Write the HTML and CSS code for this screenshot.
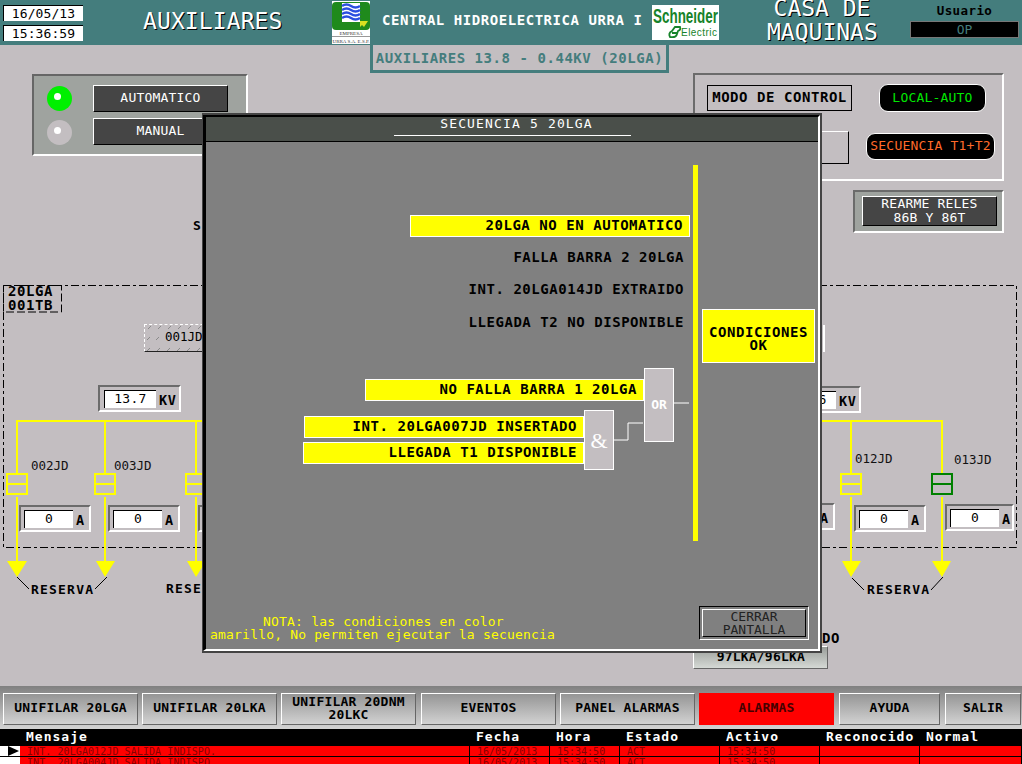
FILE: index.html
```html
<!DOCTYPE html>
<html lang="es">
<head>
<meta charset="utf-8">
<title>Auxiliares</title>
<link rel="stylesheet" href="styles.css">
</head>
<body>
<div class="page">
  <header class="header">
    <div class="clock">
      <div class="clock-box">16/05/13</div>
      <div class="clock-box">15:36:59</div>
    </div>
    <div class="title-main">AUXILIARES</div>
    <svg class="logo-urra" viewBox="0 0 38 43">
      <rect width="38" height="43" fill="#fff"/>
      <path d="M0 5Q0 1 4 1H34Q38 1 38 5V25Q38 29 34 29H4Q0 29 0 25Z" fill="#1f8a1c"/>
      <rect x="10" y="2" width="18" height="19" fill="#fff"/>
      <path d="M10 5q4.500-3 9 0t9 0M10 9q4.500-3 9 0t9 0M10 13q4.500-3 9 0t9 0M10 17q4.500-3 9 0t9 0" fill="none" stroke="#2b4fe0" stroke-width="2.400"/>
      <path d="M28 20h8l-4 6-2-2-2 2z" fill="#d8e020"/>
      <text class="logo-tiny" x="19" y="34" text-anchor="middle">EMPRESA</text>
      <rect y="35" width="38" height="1" fill="#999"/>
      <text class="logo-tiny" x="19" y="42" text-anchor="middle">URRA S.A. E.S.P.</text>
    </svg>
    <div class="title-plant">CENTRAL HIDROELECTRICA URRA I</div>
    <svg class="logo-schneider" viewBox="0 0 67 35">
      <rect width="67" height="35" fill="#fff"/>
      <text class="sch-name" x="1" y="18" textLength="65" lengthAdjust="spacingAndGlyphs">Schneider</text>
      <path d="M18 32q-2-4 2-6l3-4h5q1 3-2 4l-1 3q-1 4-7 3zM20 28h6" fill="none" stroke="#17832a" stroke-width="1.800"/>
      <text class="sch-sub" x="29" y="31" textLength="36" lengthAdjust="spacing">Electric</text>
    </svg>
    <div class="title-area">CASA DE<br>MAQUINAS</div>
    <div class="user">
      <div class="user-label">Usuario</div>
      <div class="user-value">OP</div>
    </div>
  </header>

  <main class="canvas">
    <div class="subtitle">AUXILIARES 13.8 - 0.44KV (20LGA)</div>

    <section class="auto-panel">
      <div class="mode-row"><span class="led led-on"></span><div class="dark-btn">AUTOMATICO</div></div>
      <div class="mode-row"><span class="led led-off"></span><div class="dark-btn">MANUAL</div></div>
    </section>

    <section class="control-panel">
      <div class="control-label">MODO DE CONTROL</div>
      <div class="pill pill-local">LOCAL-AUTO</div>
      <div class="hidden-box"></div>
      <div class="pill pill-seq">SECUENCIA T1+T2</div>
    </section>

    <section class="rearme-panel"><div class="rearme-btn">REARME RELES<br>86B Y 86T</div></section>

    <svg class="wires" viewBox="0 45 1022 641">
      <path class="dash" d="M3.500 312V547.500H1016.500V285.500H3.500V312"/>
      <path class="dash-label" d="M3.500 285.500H61.500V312H3.500Z"/>
      <path class="bus" d="M17 473V421H942V473M105 421V473M196 421V473M851 421V473"/>
      <path class="bus" d="M17 497V565M105 497V565M196 497V565M851 497V565M942 497V565"/>
      <path class="arrow" d="M7 561H27L17 577ZM96 561H115L105 577ZM187 561H206L196 577ZM842 561H861L851 577ZM932 561H951L942 577Z"/>
      <g class="breaker"><rect x="7" y="474" width="20" height="20"/><path d="M7 484H27"/></g>
      <g class="breaker"><rect x="95" y="474" width="20" height="20"/><path d="M95 484H115"/></g>
      <g class="breaker"><rect x="186" y="474" width="20" height="20"/><path d="M186 484H206"/></g>
      <g class="breaker"><rect x="841" y="474" width="20" height="20"/><path d="M841 484H861"/></g>
      <g class="breaker breaker-green"><rect x="932" y="474" width="20" height="20"/><path d="M932 484H952"/></g>
      <path class="leader" d="M17 577L29 589M107 577L95 589M852 578L864 590M943 577L931 590"/>
      <path class="hatch-marks" d="M148 329l3-3M158 329l3-3M168 329l3-3M178 329l3-3M188 329l3-3M198 329l3-3M147 340l3-3M156 340l3-3M147 351l3-3M157 351l3-3M167 351l3-3M177 351l3-3M187 351l3-3M197 351l3-3"/>
      <text class="jd" x="31" y="470">002JD</text>
      <text class="jd" x="114" y="470">003JD</text>
      <text class="jd" x="855" y="463">012JD</text>
      <text class="jd" x="954" y="464">013JD</text>
      <text class="res" x="31" y="594">RESERVA</text>
      <text class="res" x="166" y="593">RESERVA</text>
      <text class="res" x="867" y="594">RESERVA</text>
    </svg>

    <div class="tag">20LGA<br>001TB</div>
    <div class="stray">S</div>
    <div class="hatch">001JD</div>
    <div class="right-stub"></div>

    <div class="meter meter-kv meter-kv-l"><div class="meter-in">13.7</div><b>KV</b></div>
    <div class="meter meter-kv meter-kv-r"><div class="meter-in">13.6</div><b>KV</b></div>
    <div class="meter meter-a a1"><div class="meter-in">0</div><b>A</b></div>
    <div class="meter meter-a a2"><div class="meter-in">0</div><b>A</b></div>
    <div class="meter meter-a a3"><div class="meter-in">0</div><b>A</b></div>
    <div class="meter meter-a a4"><div class="meter-in">0</div><b>A</b></div>
    <div class="meter meter-a a5"><div class="meter-in">0</div><b>A</b></div>
    <div class="meter meter-a a6"><div class="meter-in">0</div><b>A</b></div>

    <div class="stray-do">DO</div>
    <div class="small-btn">97LKA/96LKA</div>

    <section class="modal">
      <div class="modal-inner">
        <div class="modal-title"><span class="modal-title-text">SECUENCIA 5 20LGA</span><span class="modal-title-line"></span></div>
        <div class="modal-body">
          <div class="vbar"></div>
          <div class="cond cond-yellow c1">20LGA NO EN AUTOMATICO</div>
          <div class="cond c2">FALLA BARRA 2 20LGA</div>
          <div class="cond c3">INT. 20LGA014JD EXTRAIDO</div>
          <div class="cond c4">LLEGADA T2 NO DISPONIBLE</div>
          <div class="cond cond-yellow c5">NO FALLA BARRA 1 20LGA</div>
          <div class="cond cond-yellow c6">INT. 20LGA007JD INSERTADO</div>
          <div class="cond cond-yellow c7">LLEGADA T1 DISPONIBLE</div>
          <div class="gate gate-and">&amp;</div>
          <div class="gate gate-or">OR</div>
          <svg class="logic-wires" viewBox="0 0 100 50"><path d="M0 31H14V14H29"/><path d="M60 -6H75"/></svg>
          <div class="cond-ok">CONDICIONES<br>OK</div>
          <div class="note">NOTA: las condiciones en color<br><span class="note-l2">amarillo, No permiten ejecutar la secuencia</span></div>
          <div class="close-btn"><div class="close-btn-in">CERRAR<br>PANTALLA</div></div>
        </div>
      </div>
    </section>
  </main>

  <nav class="nav">
    <div class="nav-btn w135">UNIFILAR 20LGA</div>
    <div class="nav-btn w135">UNIFILAR 20LKA</div>
    <div class="nav-btn w135">UNIFILAR 20DNM<br>20LKC</div>
    <div class="nav-btn w135 gap-wide">EVENTOS</div>
    <div class="nav-btn w135">PANEL ALARMAS</div>
    <div class="nav-btn w135 nav-alarm">ALARMAS</div>
    <div class="nav-btn w101 gap-wide">AYUDA</div>
    <div class="nav-btn w76 gap-wide">SALIR</div>
  </nav>

  <section class="alarms">
    <div class="al-row al-head">
      <div></div><div class="msg">Mensaje</div><div>Fecha</div><div>Hora</div><div>Estado</div><div>Activo</div><div>Reconocido</div><div>Normal</div>
    </div>
    <div class="al-row al-data">
      <div class="marker"><span class="marker-arrow"></span></div><div class="msg">INT. 20LGA012JD SALIDA INDISPO.</div><div>16/05/2013</div><div>15:34:50</div><div>ACT</div><div>15:34:50</div><div></div><div></div>
    </div>
    <div class="al-row al-data">
      <div class="marker"></div><div class="msg">INT. 20LGA004JD SALIDA INDISPO.</div><div>16/05/2013</div><div>15:34:50</div><div>ACT</div><div>15:34:50</div><div></div><div></div>
    </div>
  </section>
</div>
</body>
</html>
```

FILE: styles.css
```css
* { box-sizing: border-box; }
html, body { margin: 0; padding: 0; background: #c3bec1; }
body { font-family: "DejaVu Sans Mono", "Liberation Mono", monospace; font-size: 13px; color: #000; }
.page { width: 1022px; height: 764px; overflow: hidden; display: flex; flex-direction: column; }

/* header */
.header { height: 45px; flex: none; background: #447d7d; position: relative; display: flex; align-items: flex-start; }
.clock { width: 80px; margin: 5px 0 0 3px; display: flex; flex-direction: column; gap: 4px; flex: none; }
.clock-box { height: 16px; background: #fff; border-top: 1px solid #000; border-left: 1px solid #000; text-align: center; line-height: 15px; font-size: 13px; letter-spacing: .1px; }
.title-main { width: 140px; margin: 7px 0 0 60px; flex: none; font-size: 23px; line-height: 28px; color: #fff; letter-spacing: 0.1px; text-shadow: 1px 1px 0 #000; white-space: nowrap; }
.logo-urra { width: 38px; height: 43px; margin: 1px 0 0 49px; flex: none; }
.logo-tiny { font-family: "Liberation Serif", serif; font-size: 5px; fill: #333; }
.title-plant { margin: 12px 0 0 12px; width: 262px; flex: none; color: #fff; font-weight: bold; font-size: 14px; line-height: 17px; letter-spacing: .55px; white-space: nowrap; }
.logo-schneider { width: 67px; height: 35px; margin: 5px 0 0 8px; flex: none; }
.sch-name { font-family: "Liberation Sans", sans-serif; font-size: 21px; font-weight: bold; fill: #17832a; }
.sch-sub { font-family: "Liberation Sans", sans-serif; font-size: 10px; fill: #17832a; }
.title-area { width: 110px; margin: -4px 0 0 48px; flex: none; font-size: 23px; line-height: 24px; color: #fff; text-align: center; text-shadow: 1px 1px 0 #000; white-space: nowrap; }
.user { width: 109px; margin: 2px 0 0 33px; flex: none; display: flex; flex-direction: column; align-items: center; }
.user-label { font-weight: bold; font-size: 12.500px; line-height: 15px; height: 19px; padding-top: 1px; letter-spacing: .4px; }
.user-value { width: 100%; height: 17px; background: #000; border: 1px solid #777; color: #447d7d; text-align: center; font-size: 13px; line-height: 15px; }

/* canvas */
.canvas { height: 641px; flex: none; position: relative; background: #c3bec1; }
.subtitle { position: absolute; left: 370px; top: 0; width: 299px; height: 28px; border: 3px solid #447d7d; border-top: 0; color: #447d7d; font-weight: bold; font-size: 14px; line-height: 27px; letter-spacing: .55px; text-align: center; white-space: nowrap; }
.auto-panel { position: absolute; left: 32px; top: 29px; width: 216px; height: 82px; background: #9fa39f; border: 2px solid; border-color: #666 #fff #fff #666; padding: 9px 0 0 13px; display: flex; flex-direction: column; gap: 6px; }
.mode-row { display: flex; align-items: center; gap: 21px; }
.led { width: 25px; height: 25px; border-radius: 50%; flex: none; position: relative; }
.led::after { content: ""; position: absolute; left: 7px; top: 7px; width: 7px; height: 7px; border-radius: 50%; background: #fff; }
.led-on { background: #00f000; }
.led-off { background: #c3bec1; margin-top: 2px; }
.dark-btn { width: 135px; height: 27px; background: #454545; border: 1px solid; border-color: #fff #000 #000 #fff; color: #fff; text-align: center; font-size: 13px; line-height: 23px; letter-spacing: .2px; }

.control-panel { position: absolute; left: 693px; top: 28px; width: 311px; height: 108px; border: 2px solid; border-color: #6b6b6b #fff #fff #6b6b6b; display: grid; grid-template-columns: 145px 129px; grid-template-rows: 28px 33px; column-gap: 14px; row-gap: 19px; padding: 9px 0 0 12px; }
.control-label { height: 26px; margin-top: 1px; border: 1px solid #000; font-weight: bold; font-size: 14px; line-height: 22px; letter-spacing: .55px; text-align: center; white-space: nowrap; }
.pill { background: #000; border: 1px solid #fff; border-radius: 9px; text-align: center; font-size: 13px; letter-spacing: .2px; white-space: nowrap; }
.pill-local { width: 107px; height: 28px; margin-left: 13px; color: #00e800; line-height: 26px; }
.pill-seq { width: 129px; height: 27px; margin-top: 2px; color: #ff6a2a; line-height: 24px; }
.hidden-box { width: 142px; height: 33px; border: 1px solid; border-color: #fff #000 #000 #fff; }

.rearme-panel { position: absolute; left: 853px; top: 145px; width: 151px; height: 43px; background: #9fa39f; border: 2px solid; border-color: #6b6b6b #fff #fff #6b6b6b; padding: 4px 0 0 7px; }
.rearme-btn { width: 135px; height: 30px; background: #454545; border: 1px solid; border-color: #fff #000 #000 #fff; color: #fff; text-align: center; font-size: 13px; letter-spacing: .2px; line-height: 13.500px; }

.wires { position: absolute; left: 0; top: 0; width: 1022px; height: 641px; }
.dash { fill: none; stroke: #000; stroke-width: 1; stroke-dasharray: 8 3 3 3; }
.dash-label { fill: none; stroke: #000; stroke-width: 1; stroke-dasharray: 8 3; }
.bus { fill: none; stroke: #ffff00; stroke-width: 2; }
.arrow { fill: #ffff00; }
.breaker rect, .breaker path { fill: none; stroke: #ffff00; stroke-width: 2; }
.breaker-green rect, .breaker-green path { stroke: #008000; }
.leader { fill: none; stroke: #000; stroke-width: 1; }
.hatch-marks { fill: none; stroke: #8a8a8a; stroke-width: 1; }
.jd { font-size: 12.500px; fill: #111; font-family: "DejaVu Sans Mono", monospace; }
.res { font-size: 13px; fill: #000; font-family: "DejaVu Sans Mono", monospace; letter-spacing: 1.200px; font-weight: bold; }

.tag { position: absolute; left: 8px; top: 239px; font-weight: bold; font-size: 14px; line-height: 14px; letter-spacing: .55px; }
.stray { position: absolute; left: 193px; top: 174px; font-weight: bold; font-size: 13px; line-height: 14px; }
.hatch { position: absolute; left: 144px; top: 279px; width: 80px; height: 28px; border: 1px dashed #fff; border-bottom: 1px solid #222; font-size: 12.500px; line-height: 24px; padding-left: 20px; }
.right-stub { position: absolute; left: 770px; top: 280px; width: 55px; height: 27px; border-right: 2px solid #fff; }

.meter { position: absolute; display: flex; background: #c3bec1; border: 2px solid; border-color: #6b6b6b #fff #fff #6b6b6b; align-items: flex-start; font-size: 13px; }
.meter b { font-weight: bold; font-size: 13.500px; letter-spacing: .6px; margin-left: 3px; line-height: 20px; }
.meter-in { background: #fff; border-top: 1px solid #000; border-left: 1px solid #000; text-align: center; line-height: 16px; letter-spacing: .3px; }
.meter-kv { width: 83px; height: 27px; padding: 3px 0 0 4px; }
.meter-kv .meter-in { width: 52px; height: 18px; }
.meter-kv-l { left: 98px; top: 340px; }
.meter-kv-r { left: 778px; top: 341px; }
.meter-a { width: 72px; height: 27px; padding: 3px 0 0 3px; }
.meter-a .meter-in { width: 49px; height: 18px; }
.a1 { left: 19px; top: 460px; }
.a2 { left: 108px; top: 460px; }
.a3 { left: 198px; top: 460px; }
.a4 { left: 763px; top: 458px; }
.a5 { left: 854px; top: 460px; }
.a6 { left: 945px; top: 459px; width: 69px; }

.stray-do { position: absolute; left: 822px; top: 586px; font-weight: bold; font-size: 14px; line-height: 14px; letter-spacing: .55px; }
.small-btn { position: absolute; left: 693px; top: 601px; width: 135px; height: 23px; background: linear-gradient(#9a9e9a, #d5d9d5); border: 1px solid; border-color: #fff #666 #666 #fff; font-weight: bold; font-size: 13px; line-height: 20px; text-align: right; padding-right: 22px; letter-spacing: .2px; }

/* modal */
.modal { position: absolute; left: 202px; top: 68px; width: 620px; height: 540px; border: 2px solid #444; border-left-width: 1px; }
.modal-inner { width: 100%; height: 100%; background: #808080; border: 2px solid; border-color: #000 #fff #fff #000; border-left-width: 3px; display: flex; flex-direction: column; }
.modal-title { height: 25px; flex: none; background: #4a4f4a; border-bottom: 1px solid #000; display: flex; flex-direction: column; align-items: center; color: #fff; font-size: 13px; letter-spacing: 1.150px; }
.modal-title-text { line-height: 13px; margin: 0 0 0 9px; }
.modal-title-line { width: 237px; height: 1px; background: #fff; margin-top: 5px; }
.modal-body { position: relative; flex: 1; }
.vbar { position: absolute; left: 487px; top: 23px; width: 5px; height: 376px; background: #ffff00; }
.cond { position: absolute; height: 22px; font-weight: bold; font-size: 14px; line-height: 21px; letter-spacing: .55px; text-align: right; white-space: nowrap; padding-right: 6px; }
.cond-yellow { background: #ffff00; border: 1px solid #fff; line-height: 18px; }
.c1 { left: 204px; top: 73px; width: 280px; }
.c2 { left: 204px; top: 105px; width: 280px; }
.c3 { left: 204px; top: 137px; width: 280px; }
.c4 { left: 204px; top: 170px; width: 280px; }
.c5 { left: 159px; top: 237px; width: 279px; }
.c6 { left: 98px; top: 274px; width: 280px; }
.c7 { left: 97px; top: 300px; width: 281px; }
.gate { position: absolute; width: 30px; background: #c3bec1; border: 1px solid #fff; color: #fff; display: flex; align-items: center; justify-content: center; }
.gate-and { left: 378px; top: 268px; height: 60px; font-family: "Liberation Serif", serif; font-size: 22px; padding-top: 1px; }
.gate-or { left: 438px; top: 226px; height: 74px; font-size: 13px; font-weight: bold; padding-bottom: 2px; }
.logic-wires { position: absolute; left: 408px; top: 267px; width: 100px; height: 50px; overflow: visible; }
.logic-wires path { fill: none; stroke: #fff; stroke-width: 1; }
.cond-ok { position: absolute; left: 496px; top: 167px; width: 113px; height: 54px; background: #ffff00; border: 1px solid #fff; text-align: center; font-weight: bold; font-size: 14px; line-height: 13px; letter-spacing: .55px; padding-top: 16px; }
.note { position: absolute; left: 4px; top: 473px; width: 360px; color: #ffff00; font-size: 13px; line-height: 13px; letter-spacing: .2px; text-align: left; padding-left: 53px; white-space: nowrap; }
.note-l2 { margin-left: -53px; }
.close-btn { position: absolute; left: 493px; top: 464px; width: 110px; height: 34px; border: 1px solid; border-color: #000 #fff #fff #000; padding: 2px; }
.close-btn-in { width: 100%; height: 100%; border: 1px solid; border-color: #fff #000 #000 #fff; text-align: center; font-size: 13px; line-height: 13px; color: #222; }

/* nav */
.nav { height: 43px; flex: none; background: linear-gradient(#808080, #d4d4d4); display: flex; padding: 7px 0 0 3px; gap: 4px; }
.nav-btn { height: 32px; flex: none; background: linear-gradient(#959595, #d2d2d2); border: 1px solid; border-color: #fff #666 #666 #fff; display: flex; align-items: center; justify-content: center; text-align: center; font-weight: bold; font-size: 13px; line-height: 13px; letter-spacing: .2px; white-space: nowrap; padding-bottom: 3px; }
.gap-wide { margin-left: 1px; }
.w135 { width: 135px; }
.w101 { width: 101px; }
.w76 { width: 76px; }
.nav-alarm { background: #ff0000; border-color: #ff0000; color: #400; }

/* alarms */
.alarms { height: 35px; flex: none; background: #000; overflow: hidden; }
.al-row { display: grid; grid-template-columns: 20px 450px 80px 70px 100px 100px 100px 102px; }
.al-head { height: 17px; color: #fff; font-size: 13px; line-height: 15px; font-weight: bold; letter-spacing: 1px; }
.al-head > div { padding-left: 6px; white-space: nowrap; }
.al-data { height: 11px; color: #8a0000; font-size: 10px; line-height: 11px; }
.al-data > div { height: 10px; background: #ff0000; border-right: 1px solid #000; padding-left: 7px; white-space: nowrap; overflow: hidden; }
.al-data > .marker { background: #fff; padding: 0; position: relative; border-right: 0; }
.marker-arrow { position: absolute; left: 8px; top: 0; border-left: 11px solid #000; border-top: 5px solid transparent; border-bottom: 5px solid transparent; }
.al-data .msg { padding-left: 7px; letter-spacing: .08px; }
```
